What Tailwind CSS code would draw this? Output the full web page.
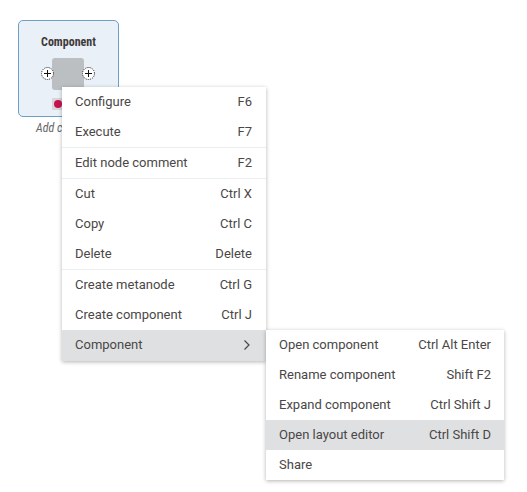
<!DOCTYPE html>
<html><head><meta charset="utf-8">
<script src="https://cdn.jsdelivr.net/npm/@tailwindcss/browser@4"></script>
</head>
<body class="bg-white w-[527px] h-[492px] overflow-hidden relative font-['Roboto',sans-serif] text-[13px] text-[#4a4746]">
<div class="absolute left-[18px] top-[20px] w-[101px] h-[97px] rounded-[5px] border border-[#6e9fc5] bg-[#e9f0f7] flex flex-col items-center">
  <div class="mt-[14px] font-bold text-[12px] leading-[14px] text-[#3e3a39] font-['Roboto_Condensed','Roboto',sans-serif]">Component</div>
  <div class="absolute left-[33px] top-[37px] w-[32px] h-[32px] rounded-[3px] bg-[#bcbfc2]"></div>
  <svg class="absolute left-[21px] top-[45px]" width="15" height="15" viewBox="0 0 15 15"><circle cx="7.5" cy="7.500" r="6" fill="#fff" stroke="#333" stroke-dasharray="1.200 1"/><path d="M4 7.500h7M7.500 4v7" stroke="#111" stroke-width="1"/></svg>
  <svg class="absolute left-[62px] top-[45px]" width="15" height="15" viewBox="0 0 15 15"><circle cx="7.5" cy="7.500" r="6" fill="#fff" stroke="#333" stroke-dasharray="1.200 1"/><path d="M4 7.500h7M7.500 4v7" stroke="#111" stroke-width="1"/></svg>
  <div class="absolute left-[33px] top-[77px] w-[32px] h-[12px] bg-[#d4d6d8] flex items-center pl-[2px]"><div class="w-[8px] h-[8px] rounded-full bg-[#c8104f]"></div></div>
</div>
<div class="absolute left-[36px] top-[121px] italic text-[12px] leading-[14px] text-[#666] whitespace-nowrap font-['Roboto_Condensed','Roboto',sans-serif]">Add comment</div>

<div class="absolute left-[62px] top-[87px] w-[204px] bg-white shadow-[0_1px_4px_rgba(0,0,0,0.3)]">
  <div class="h-[30px] flex items-center justify-between pl-[13px] pr-[14px]"><span>Configure</span><span>F6</span></div>
  <div class="h-[30px] flex items-center justify-between pl-[13px] pr-[14px]"><span>Execute</span><span>F7</span></div>
  <div class="h-[31px] flex items-center justify-between pl-[13px] pr-[14px] border-t border-[#eceded]"><span>Edit node comment</span><span>F2</span></div>
  <div class="h-[31px] flex items-center justify-between pl-[13px] pr-[14px] border-t border-[#eceded]"><span>Cut</span><span>Ctrl X</span></div>
  <div class="h-[30px] flex items-center justify-between pl-[13px] pr-[14px]"><span>Copy</span><span>Ctrl C</span></div>
  <div class="h-[30px] flex items-center justify-between pl-[13px] pr-[14px]"><span>Delete</span><span>Delete</span></div>
  <div class="h-[31px] flex items-center justify-between pl-[13px] pr-[14px] border-t border-[#eceded]"><span>Create metanode</span><span>Ctrl G</span></div>
  <div class="h-[30px] flex items-center justify-between pl-[13px] pr-[14px]"><span>Create component</span><span>Ctrl J</span></div>
  <div class="h-[31px] pb-[1px] flex items-center justify-between pl-[13px] pr-[15px] bg-[#dfe0e2]"><span>Component</span>
    <svg width="8" height="12" viewBox="0 0 8 12" fill="none"><path d="M1.500 1.500 6 6l-4.500 4.500" stroke="#4a4746" stroke-width="1.200"/></svg></div>
</div>

<div class="absolute left-[266px] top-[330px] w-[238px] bg-white shadow-[0_1px_4px_rgba(0,0,0,0.3)]">
  <div class="h-[30px] flex items-center justify-between pl-[13px] pr-[13px]"><span>Open component</span><span>Ctrl Alt Enter</span></div>
  <div class="h-[30px] flex items-center justify-between pl-[13px] pr-[13px]"><span>Rename component</span><span>Shift F2</span></div>
  <div class="h-[30px] flex items-center justify-between pl-[13px] pr-[13px]"><span>Expand component</span><span>Ctrl Shift J</span></div>
  <div class="h-[30px] flex items-center justify-between pl-[13px] pr-[13px] bg-[#dfe0e2]"><span>Open layout editor</span><span>Ctrl Shift D</span></div>
  <div class="h-[30px] flex items-center justify-between pl-[13px] pr-[13px]"><span>Share</span></div>
</div>
</body></html>
